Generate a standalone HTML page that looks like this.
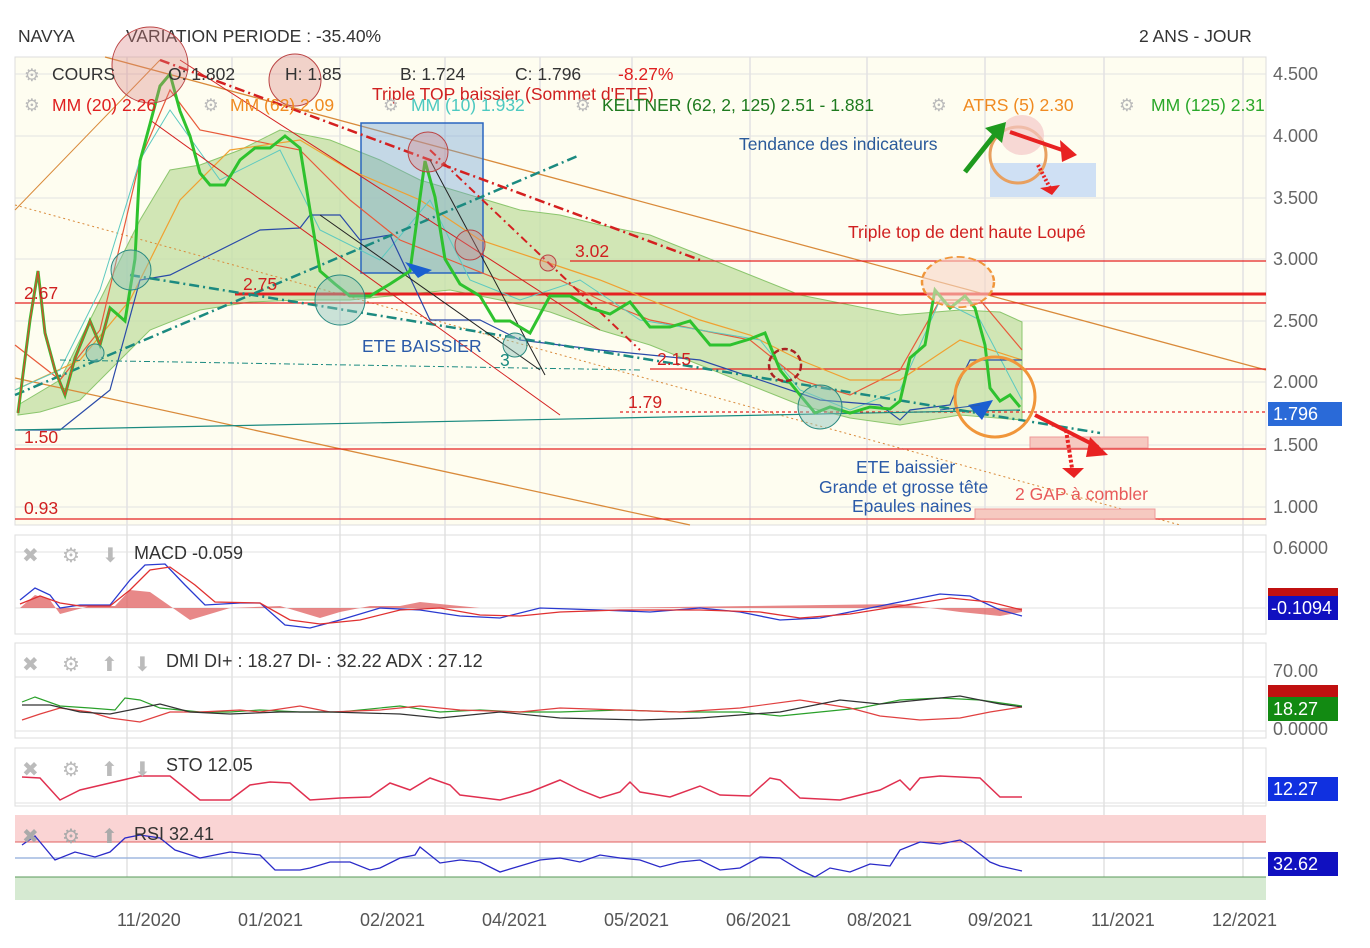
<!DOCTYPE html>
<html><head><meta charset="utf-8"><style>
body{margin:0;background:#fff;width:1370px;height:948px;overflow:hidden;font-family:"Liberation Sans",sans-serif}
svg{position:absolute;left:0;top:0}
</style></head><body>
<svg width="1370" height="948" viewBox="0 0 1370 948" font-family="Liberation Sans, sans-serif">
<!-- header -->
<text x="18" y="42" font-size="17.5" fill="#333">NAVYA</text>
<text x="126" y="42" font-size="17.5" fill="#333">VARIATION PERIODE : -35.40%</text>
<text x="1139" y="42" font-size="17.5" fill="#333">2 ANS - JOUR</text>

<!-- main panel -->
<rect x="15" y="57" width="1251" height="468" fill="#fefdf0" stroke="#ddd"/>
<g stroke="#e2e2e2" stroke-width="1">
<line x1="15" y1="74" x2="1266" y2="74"/><line x1="15" y1="136" x2="1266" y2="136"/><line x1="15" y1="198" x2="1266" y2="198"/><line x1="15" y1="259" x2="1266" y2="259"/><line x1="15" y1="321" x2="1266" y2="321"/><line x1="15" y1="382" x2="1266" y2="382"/><line x1="15" y1="445" x2="1266" y2="445"/><line x1="15" y1="507" x2="1266" y2="507"/>
</g>
<g stroke="#e2e2e2" stroke-width="1.5">
<line x1="127" y1="57" x2="127" y2="900"/><line x1="232" y1="57" x2="232" y2="900"/><line x1="340" y1="57" x2="340" y2="900"/><line x1="445" y1="57" x2="445" y2="900"/><line x1="540" y1="57" x2="540" y2="900"/><line x1="632" y1="57" x2="632" y2="900"/><line x1="750" y1="57" x2="750" y2="900"/><line x1="867" y1="57" x2="867" y2="900"/><line x1="985" y1="57" x2="985" y2="900"/><line x1="1104" y1="57" x2="1104" y2="900"/><line x1="1243" y1="57" x2="1243" y2="900"/>
</g>
<!-- green bollinger band -->
<polygon points="18,405 60,380 100,300 140,220 170,170 200,165 240,150 280,130 330,140 380,160 420,180 470,195 520,210 560,215 600,225 650,235 700,255 750,275 800,295 850,305 900,315 960,310 1000,312 1022,322 1022,420 960,415 900,425 850,418 800,405 750,385 700,365 650,345 600,330 550,312 500,300 450,290 400,295 350,300 300,300 250,302 200,310 150,330 120,360 80,400 40,412 18,415" fill="#c6e0a6" fill-opacity="0.8" stroke="#8cc66e" stroke-width="1"/>
<!-- channels -->
<line x1="105" y1="57" x2="1266" y2="370" stroke="#d98a3a" stroke-width="1.3"/>
<line x1="15" y1="210" x2="160" y2="60" stroke="#d98a3a" stroke-width="1"/>
<line x1="15" y1="378" x2="690" y2="525" stroke="#d98a3a" stroke-width="1.3"/>
<line x1="15" y1="205" x2="1180" y2="525" stroke="#d98a3a" stroke-width="1" stroke-dasharray="2,3"/>
<!-- blue box -->
<rect x="361" y="123" width="122" height="150" fill="#6f9fd8" fill-opacity="0.4" stroke="#2a66c0" stroke-width="1.5"/>
<!-- red horizontals -->
<g stroke="#e52222">
<line x1="235" y1="294" x2="1266" y2="294" stroke-width="3"/>
<line x1="15" y1="303" x2="1266" y2="303" stroke-width="1.3"/>
<line x1="570" y1="261" x2="1266" y2="261" stroke-width="1.3"/>
<line x1="650" y1="369" x2="1266" y2="369" stroke-width="1.3"/>
<line x1="15" y1="449" x2="1266" y2="449" stroke-width="1.3"/>
<line x1="15" y1="519" x2="1266" y2="519" stroke-width="1.3"/>
<line x1="620" y1="412" x2="1266" y2="412" stroke-width="1.2" stroke-dasharray="3,3"/>
</g>
<rect x="1030" y="437" width="118" height="11" fill="#f6c9c0" stroke="#e99" />
<rect x="975" y="509" width="180" height="10" fill="#f6c9c0" stroke="#e99"/>
<!-- moving averages -->
<polyline points="15,345 60,380 100,330 140,160 170,90 200,130 250,140 300,150 350,200 400,240 450,260 500,280 560,280 600,300 650,320 700,330 750,340 800,380 850,395 900,370 940,300 980,300 1022,350" fill="none" stroke="#e85a3a" stroke-width="1.2"/>
<polyline points="15,390 80,360 130,300 180,200 230,150 300,140 350,170 420,200 480,240 540,260 600,280 650,300 700,320 750,335 800,360 850,380 900,380 960,340 1022,360" fill="none" stroke="#f0a030" stroke-width="1.2"/>
<polyline points="15,390 60,370 100,290 140,160 170,110 220,180 280,150 320,230 380,260 430,200 470,280 520,300 580,280 640,320 700,330 760,340 800,390 850,410 900,390 940,300 980,320 1022,400" fill="none" stroke="#5cc9c0" stroke-width="1"/>
<polyline points="18,430 60,430 110,390 140,280 170,275 200,260 260,230 300,228 310,215 340,215 360,240 390,235 430,320 480,320 520,340 600,350 700,360 820,400 880,405 900,420 910,410 950,405 960,380 970,360 1022,360" fill="none" stroke="#2a4aa8" stroke-width="1.2"/>
<!-- teal trend lines -->
<line x1="15" y1="395" x2="580" y2="155" stroke="#1b8a80" stroke-width="2.5" stroke-dasharray="10,4,2,4"/>
<line x1="130" y1="275" x2="1100" y2="433" stroke="#1b8a80" stroke-width="2.5" stroke-dasharray="10,4,2,4"/>
<line x1="15" y1="430" x2="1020" y2="410" stroke="#1b8a80" stroke-width="1.2"/>
<line x1="60" y1="360" x2="640" y2="370" stroke="#1b8a80" stroke-width="1" stroke-dasharray="6,3,2,3"/>
<!-- red dashed descending -->
<line x1="160" y1="60" x2="700" y2="260" stroke="#d42020" stroke-width="2.5" stroke-dasharray="10,4,2,4"/>
<line x1="430" y1="150" x2="640" y2="350" stroke="#d42020" stroke-width="2" stroke-dasharray="8,4,2,4"/>
<line x1="180" y1="60" x2="600" y2="330" stroke="#d42020" stroke-width="1"/>
<line x1="150" y1="120" x2="560" y2="415" stroke="#d42020" stroke-width="1"/>
<line x1="320" y1="215" x2="540" y2="370" stroke="#222" stroke-width="1"/>
<line x1="430" y1="160" x2="545" y2="375" stroke="#222" stroke-width="1"/>
<!-- price -->
<polyline points="18,413 30,320 38,271 45,333 55,370 65,395 75,358 90,321 100,345 110,308 125,321 135,259 140,161 150,124 160,86 170,74 180,111 190,136 200,173 210,185 225,185 240,160 255,148 270,148 285,136 300,148 310,210 320,271 335,284 350,296 370,296 390,284 410,271 425,161 435,197 445,259 460,284 480,296 495,321 510,321 530,333 550,296 570,296 590,308 610,314 630,302 650,327 670,327 690,321 710,345 730,345 750,339 765,333 780,370 800,395 815,413 830,407 850,413 870,407 890,409 900,401 910,358 925,345 935,290 950,308 965,296 975,308 985,345 990,388 1000,401 1010,395 1020,407" fill="none" stroke="#2ec22e" stroke-width="3"/>
<polyline points="18,413 30,320 38,271 45,333 55,370 65,395 75,358 90,321 100,345 110,308" fill="none" stroke="#c9542e" stroke-width="1.5"/>
<!-- circles -->
<g fill="#d98080" fill-opacity="0.35" stroke="#b44" stroke-width="1">
<circle cx="150" cy="65" r="38"/><circle cx="295" cy="80" r="26"/><circle cx="428" cy="152" r="20"/><circle cx="470" cy="245" r="15"/><circle cx="548" cy="263" r="8"/>
</g>
<circle cx="785" cy="365" r="16" fill="none" stroke="#a22" stroke-width="2.5" stroke-dasharray="6,3"/>
<g fill="#8cc0b8" fill-opacity="0.45" stroke="#2a8a80">
<circle cx="131" cy="270" r="20"/><circle cx="340" cy="300" r="25"/><circle cx="95" cy="353" r="9"/><circle cx="515" cy="345" r="12"/><circle cx="820" cy="407" r="22"/>
</g>
<circle cx="995" cy="397" r="40" fill="none" stroke="#f0963a" stroke-width="3"/>
<circle cx="958" cy="282" r="36" fill="#f6d6c6" fill-opacity="0.6" stroke="#f0963a" stroke-width="2.5" stroke-dasharray="8,4" transform="scale(1,0.7) translate(0,121)"/>
<!-- text annotations -->
<g font-size="17.5">
<text x="372" y="100" fill="#d02020">Triple TOP baissier (Sommet d'ETE)</text>
<text x="243" y="290" fill="#d02020">2.75</text>
<text x="24" y="299" fill="#d02020">2.67</text>
<text x="575" y="257" fill="#d02020">3.02</text>
<text x="657" y="365" fill="#d02020">2.15</text>
<text x="628" y="408" fill="#d02020">1.79</text>
<text x="24" y="443" fill="#d02020">1.50</text>
<text x="24" y="514" fill="#d02020">0.93</text>
<text x="362" y="352" fill="#2a5aa8">ETE BAISSIER</text>
<text x="500" y="366" fill="#1b8a80">3</text>
<text x="739" y="150" fill="#2a5a9a">Tendance des indicateurs</text>
<text x="848" y="238" fill="#d02020">Triple top de dent haute Loupé</text>
<text x="856" y="473" fill="#2a5aa8">ETE baissier</text>
<text x="819" y="493" fill="#2a5aa8">Grande et grosse tête</text>
<text x="852" y="512" fill="#2a5aa8">Epaules naines</text>
<text x="1015" y="500" fill="#e85a5a">2 GAP à combler</text>
</g>
<!-- arrows -->
<path d="M405 262 L432 270 L418 278 Z" fill="#1a5fd0"/>
<path d="M968 405 L993 400 L982 420 Z" fill="#1a5fd0"/>
<line x1="940" y1="410" x2="980" y2="405" stroke="#2a5aa8"/>
<rect x="990" y="163" width="106" height="34" fill="#cfe0f4"/>
<circle cx="1018" cy="155" r="28" fill="none" stroke="#e8a060" stroke-width="3"/>
<ellipse cx="1022" cy="135" rx="22" ry="20" fill="#f3c8c8" fill-opacity="0.7"/>
<line x1="965" y1="172" x2="996" y2="133" stroke="#1e9a1e" stroke-width="5"/>
<path d="M985 128 L1006 122 L1002 143 Z" fill="#1e9a1e"/>
<line x1="1010" y1="132" x2="1068" y2="152" stroke="#e82222" stroke-width="4"/>
<path d="M1060 140 L1077 155 L1062 162 Z" fill="#e82222"/>
<line x1="1038" y1="165" x2="1050" y2="188" stroke="#e82222" stroke-width="4" stroke-dasharray="2,2"/>
<path d="M1040 188 L1060 185 L1052 195 Z" fill="#e82222"/>
<line x1="1035" y1="415" x2="1098" y2="447" stroke="#e82222" stroke-width="4"/>
<path d="M1090 437 L1108 455 L1086 457 Z" fill="#e82222"/>
<line x1="1066" y1="430" x2="1072" y2="468" stroke="#e82222" stroke-width="4" stroke-dasharray="3,2"/>
<path d="M1062 468 L1084 468 L1074 478 Z" fill="#e82222"/>
<!-- legend -->
<g font-size="17.5">
<text x="24" y="81" fill="#bbb">⚙</text><text x="52" y="80" fill="#333">COURS</text>
<text x="168" y="80" fill="#333">O: 1.802</text><text x="285" y="80" fill="#333">H: 1.85</text>
<text x="400" y="80" fill="#333">B: 1.724</text><text x="515" y="80" fill="#333">C: 1.796</text>
<text x="618" y="80" fill="#e02020">-8.27%</text>
<text x="24" y="111" fill="#bbb">⚙</text><text x="52" y="111" fill="#e02020">MM (20) 2.26</text>
<text x="203" y="111" fill="#bbb">⚙</text><text x="230" y="111" fill="#f08a20">MM (62) 2.09</text>
<text x="383" y="111" fill="#bbb">⚙</text><text x="411" y="111" fill="#4cc9c0">MM (10) 1.932</text>
<text x="575" y="111" fill="#bbb">⚙</text><text x="602" y="111" fill="#1e7a1e">KELTNER (62, 2, 125) 2.51 - 1.881</text>
<text x="931" y="111" fill="#bbb">⚙</text><text x="963" y="111" fill="#f08a20">ATRS (5) 2.30</text>
<text x="1119" y="111" fill="#bbb">⚙</text><text x="1151" y="111" fill="#2aa82a">MM (125) 2.31</text>
</g>
<!-- right axis -->
<g font-size="18" fill="#666">
<text x="1273" y="80">4.500</text><text x="1273" y="142">4.000</text><text x="1273" y="204">3.500</text><text x="1273" y="265">3.000</text><text x="1273" y="327">2.500</text><text x="1273" y="388">2.000</text><text x="1273" y="451">1.500</text><text x="1273" y="513">1.000</text>
<text x="1273" y="554">0.6000</text><text x="1273" y="677">70.00</text><text x="1273" y="735">0.0000</text>
</g>
<rect x="1268" y="402" width="74" height="24" fill="#2a6ad8"/><text x="1273" y="420" font-size="18" fill="#fff">1.796</text>

<!-- MACD -->
<rect x="15" y="535" width="1251" height="99" fill="none" stroke="#ddd"/>
<line x1="15" y1="552" x2="1266" y2="552" stroke="#e2e2e2"/><line x1="15" y1="608" x2="1266" y2="608" stroke="#e2e2e2"/>
<path d="M20,608 L35,595 L50,600 L60,614 L75,610 L90,606 L115,606 L130,590 L150,592 L170,606 L190,620 L210,614 L230,608 L280,606 L320,618 L340,612 L370,606 L400,606 L420,602 L440,604 L480,608 L600,608 L750,606 L900,604 L960,612 L1000,616 L1022,612 L1022,608 Z" fill="#e06060" fill-opacity="0.75"/>
<polyline points="20,600 35,588 50,595 60,608 80,605 110,605 130,580 145,565 165,564 185,585 205,605 240,603 260,603 285,625 310,628 340,620 380,608 420,610 460,616 500,618 540,608 600,610 650,612 700,608 740,612 780,620 820,618 860,610 900,602 940,594 970,596 1000,610 1022,616" fill="none" stroke="#2a3ad0" stroke-width="1.3"/>
<polyline points="20,604 40,596 60,603 80,606 110,606 130,590 150,570 170,567 195,585 215,602 260,603 290,620 320,624 360,620 400,610 440,608 480,615 520,616 560,612 620,610 700,610 760,612 800,618 850,614 900,606 950,598 990,602 1022,610" fill="none" stroke="#e03030" stroke-width="1.3"/>
<g fill="#bbb" font-size="20"><text x="22" y="562">✖</text><text x="62" y="562">⚙</text><text x="102" y="562">⬇</text></g>
<text x="134" y="559" font-size="18" fill="#333">MACD  -0.059</text>
<rect x="1268" y="588" width="70" height="10" fill="#c01010"/>
<rect x="1268" y="596" width="70" height="24" fill="#1010c0"/><text x="1271" y="614" font-size="18" fill="#fff">-0.1094</text>

<!-- DMI -->
<rect x="15" y="643" width="1251" height="95" fill="none" stroke="#ddd"/>
<line x1="15" y1="677" x2="1266" y2="677" stroke="#e2e2e2"/><line x1="15" y1="731" x2="1266" y2="731" stroke="#e2e2e2"/>
<polyline points="22,702 35,697 60,706 90,708 115,710 125,698 140,700 160,708 200,712 230,712 260,710 300,712 340,712 400,706 440,712 480,710 520,712 560,712 620,710 680,712 740,712 780,716 820,712 860,708 900,700 940,698 980,700 1022,706" fill="none" stroke="#2aa02a" stroke-width="1.2"/>
<polyline points="22,720 40,714 60,708 90,712 110,718 140,722 170,712 200,712 240,710 260,712 300,706 330,712 380,710 420,706 460,710 520,712 560,708 620,710 680,712 740,708 800,700 850,708 880,716 920,720 960,718 990,712 1022,707" fill="none" stroke="#e04040" stroke-width="1.2"/>
<polyline points="22,705 50,705 80,712 110,714 140,708 160,704 190,712 230,714 280,712 330,712 400,714 440,718 500,712 560,718 640,720 700,718 780,712 840,700 880,704 920,700 960,696 1000,704 1022,707" fill="none" stroke="#333" stroke-width="1.2"/>
<g fill="#bbb" font-size="20"><text x="22" y="671">✖</text><text x="62" y="671">⚙</text><text x="101" y="671">⬆</text><text x="134" y="671">⬇</text></g>
<text x="166" y="667" font-size="18" fill="#333">DMI  DI+ : 18.27 DI- : 32.22 ADX : 27.12</text>
<rect x="1268" y="685" width="70" height="14" fill="#c01010"/>
<rect x="1268" y="697" width="70" height="24" fill="#128a12"/><text x="1273" y="715" font-size="18" fill="#fff">18.27</text>

<!-- STO -->
<rect x="15" y="748" width="1251" height="58" fill="none" stroke="#ddd"/>
<line x1="15" y1="803" x2="1266" y2="803" stroke="#e2e2e2"/>
<polyline points="22,777 40,778 60,800 80,790 110,783 140,776 170,776 200,800 230,800 250,785 270,782 290,783 310,800 340,798 370,797 390,783 410,790 430,778 450,785 460,795 500,800 530,792 560,780 580,790 600,798 620,792 630,782 640,792 670,797 700,786 720,795 750,796 770,778 780,780 800,798 840,800 860,795 880,790 900,780 910,790 920,778 940,776 980,778 1000,797 1022,797" fill="none" stroke="#e03050" stroke-width="1.5"/>
<g fill="#bbb" font-size="20"><text x="22" y="776">✖</text><text x="62" y="776">⚙</text><text x="101" y="776">⬆</text><text x="134" y="776">⬇</text></g>
<text x="166" y="771" font-size="18" fill="#333">STO  12.05</text>
<rect x="1268" y="777" width="70" height="24" fill="#1030e0"/><text x="1273" y="795" font-size="18" fill="#fff">12.27</text>

<!-- RSI -->
<rect x="15" y="815" width="1251" height="27" fill="#fad4d4"/>
<rect x="15" y="877" width="1251" height="23" fill="#d6ead2"/>
<line x1="15" y1="842" x2="1266" y2="842" stroke="#e06060"/>
<line x1="15" y1="858" x2="1266" y2="858" stroke="#a0b8e0" stroke-width="1.5"/>
<line x1="15" y1="877" x2="1266" y2="877" stroke="#5a9a5a"/>
<polyline points="22,845 35,836 55,860 75,852 95,857 110,852 125,838 140,835 160,838 175,850 200,858 230,852 260,855 275,870 300,870 310,868 330,862 350,862 370,870 380,868 400,858 415,855 420,847 440,863 460,860 480,862 500,872 520,866 540,860 560,858 580,862 600,855 620,858 640,860 660,867 680,862 700,860 720,870 740,868 760,857 780,858 800,870 815,877 830,868 850,872 870,864 890,866 900,850 920,842 940,844 960,840 970,846 990,862 1000,866 1022,871" fill="none" stroke="#2a2ac8" stroke-width="1.3"/>
<g fill="#aaa" font-size="20"><text x="22" y="843">✖</text><text x="62" y="843">⚙</text><text x="101" y="843">⬆</text></g>
<text x="134" y="840" font-size="18" fill="#333">RSI  32.41</text>
<rect x="1268" y="852" width="70" height="24" fill="#1010c0"/><text x="1273" y="870" font-size="18" fill="#fff">32.62</text>

<!-- x axis -->
<g font-size="18" fill="#555">
<text x="117" y="926">11/2020</text><text x="238" y="926">01/2021</text><text x="360" y="926">02/2021</text><text x="482" y="926">04/2021</text><text x="604" y="926">05/2021</text><text x="726" y="926">06/2021</text><text x="847" y="926">08/2021</text><text x="968" y="926">09/2021</text><text x="1091" y="926">11/2021</text><text x="1212" y="926">12/2021</text>
</g>
</svg>
</body></html>
